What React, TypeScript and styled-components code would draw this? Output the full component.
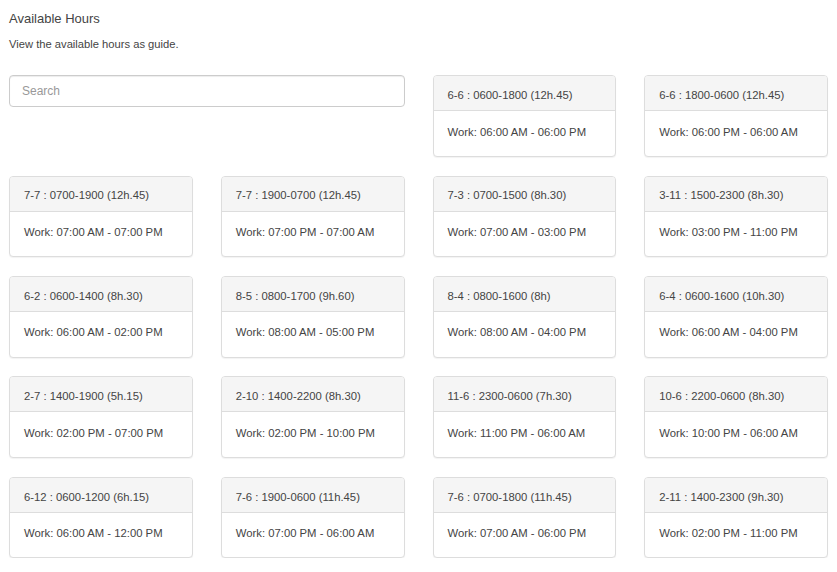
import React from "react";
import styled, { createGlobalStyle } from "styled-components";

const GlobalStyle = createGlobalStyle`
  html, body { margin: 0; padding: 0; background: #fff; }
  body { font-family: "Liberation Sans", Arial, Helvetica, sans-serif; color: #444; }
  * { box-sizing: border-box; }
`;

const Page = styled.div`
  padding: 11px 9px 0 9px;
`;

const Title = styled.h1`
  margin: 0;
  font-size: 13px;
  line-height: 16px;
  font-weight: normal;
  color: #444;
`;

const Subtitle = styled.p`
  margin: 9.5px 0 0 0;
  font-size: 11.2px;
  line-height: 14px;
  color: #444;
`;

const Grid = styled.div`
  margin-top: 24.7px;
  display: grid;
  grid-template-columns: repeat(4, 1fr);
  column-gap: 28px;
  row-gap: 18.8px;
`;

const SearchBox = styled.input`
  grid-column: span 2;
  align-self: start;
  margin-top: -0.5px;
  height: 32px;
  width: 100%;
  padding: 0 12px;
  border: 1px solid #ccc;
  border-radius: 4px;
  box-shadow: inset 0 1px 1px rgba(0, 0, 0, 0.075);
  font-family: "Liberation Sans", Arial, Helvetica, sans-serif;
  font-size: 12px;
  color: #555;
  outline: none;
  &::placeholder { color: #999; }
`;

const Card = styled.div`
  border: 1px solid #ddd;
  border-radius: 4px;
  background: #fff;
  box-shadow: 0 1px 1px rgba(0, 0, 0, 0.05);
  overflow: hidden;
`;

const CardHeader = styled.div`
  height: 35px;
  padding: 11.8px 14px 0 14px;
  background: #f5f5f5;
  border-bottom: 1px solid #ddd;
  font-size: 11.3px;
  line-height: 14px;
  color: #444;
  white-space: nowrap;
`;

const CardBody = styled.div`
  height: 44.6px;
  padding: 13.5px 14px 0 14px;
  font-size: 11.3px;
  line-height: 14px;
  color: #444;
  white-space: nowrap;
`;

type Shift = { name: string; work: string };

const shifts: Shift[] = [
  { name: "6-6 : 0600-1800 (12h.45)", work: "Work: 06:00 AM - 06:00 PM" },
  { name: "6-6 : 1800-0600 (12h.45)", work: "Work: 06:00 PM - 06:00 AM" },
  { name: "7-7 : 0700-1900 (12h.45)", work: "Work: 07:00 AM - 07:00 PM" },
  { name: "7-7 : 1900-0700 (12h.45)", work: "Work: 07:00 PM - 07:00 AM" },
  { name: "7-3 : 0700-1500 (8h.30)", work: "Work: 07:00 AM - 03:00 PM" },
  { name: "3-11 : 1500-2300 (8h.30)", work: "Work: 03:00 PM - 11:00 PM" },
  { name: "6-2 : 0600-1400 (8h.30)", work: "Work: 06:00 AM - 02:00 PM" },
  { name: "8-5 : 0800-1700 (9h.60)", work: "Work: 08:00 AM - 05:00 PM" },
  { name: "8-4 : 0800-1600 (8h)", work: "Work: 08:00 AM - 04:00 PM" },
  { name: "6-4 : 0600-1600 (10h.30)", work: "Work: 06:00 AM - 04:00 PM" },
  { name: "2-7 : 1400-1900 (5h.15)", work: "Work: 02:00 PM - 07:00 PM" },
  { name: "2-10 : 1400-2200 (8h.30)", work: "Work: 02:00 PM - 10:00 PM" },
  { name: "11-6 : 2300-0600 (7h.30)", work: "Work: 11:00 PM - 06:00 AM" },
  { name: "10-6 : 2200-0600 (8h.30)", work: "Work: 10:00 PM - 06:00 AM" },
  { name: "6-12 : 0600-1200 (6h.15)", work: "Work: 06:00 AM - 12:00 PM" },
  { name: "7-6 : 1900-0600 (11h.45)", work: "Work: 07:00 PM - 06:00 AM" },
  { name: "7-6 : 0700-1800 (11h.45)", work: "Work: 07:00 AM - 06:00 PM" },
  { name: "2-11 : 1400-2300 (9h.30)", work: "Work: 02:00 PM - 11:00 PM" },
];

export default function App() {
  return (
    <>
      <GlobalStyle />
      <Page>
        <Title>Available Hours</Title>
        <Subtitle>View the available hours as guide.</Subtitle>
        <Grid>
          <SearchBox type="text" placeholder="Search" />
          {shifts.map((s) => (
            <Card key={s.name}>
              <CardHeader>{s.name}</CardHeader>
              <CardBody>{s.work}</CardBody>
            </Card>
          ))}
        </Grid>
      </Page>
    </>
  );
}
